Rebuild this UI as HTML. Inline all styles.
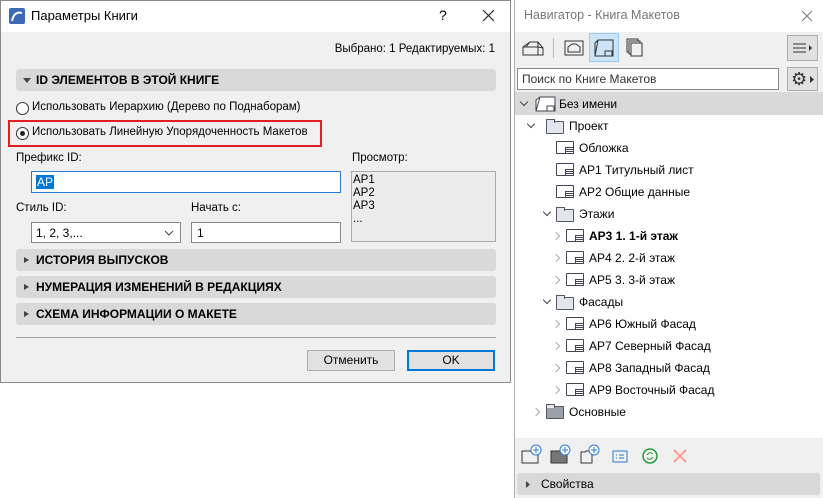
<!DOCTYPE html>
<html><head><meta charset="utf-8"><style>
*{margin:0;padding:0;box-sizing:border-box}
body{width:823px;height:498px;background:#fff;font-family:"Liberation Sans",sans-serif;font-size:12px;color:#000;position:relative;overflow:hidden}
.a{position:absolute;white-space:nowrap}
.sec{position:absolute;left:16px;width:480px;height:22px;background:#d9d9d9;border-radius:3px;font-weight:bold;font-size:12px;line-height:22px;padding-left:20px}
.sec:before{content:"";position:absolute;left:8px;top:8px;border-left:5px solid #444;border-top:3px solid transparent;border-bottom:3px solid transparent}
.sec.open:before{left:7px;top:9px;border-top:5px solid #444;border-left:4px solid transparent;border-right:4px solid transparent;border-bottom:0}
.radio{position:absolute;width:13px;height:13px;border:1px solid #333;border-radius:50%;background:#fff}
.row{position:absolute;height:22px;line-height:22px;font-size:12px}
.sheet{position:absolute;width:18px;height:13px;border:1px solid #445;border-radius:1px;background:#fff}
.sheet:after{content:"";position:absolute;right:-1px;bottom:-1px;width:7px;height:5px;border:1px solid #445;background:repeating-linear-gradient(#fff 0 1px,#445 1px 2px)}
.fold{position:absolute;width:18px;height:13px;border:1px solid #556;background:#e3e6ec;border-radius:1px}
.fold:before{content:"";position:absolute;left:-1px;top:-3px;width:7px;height:3px;border:1px solid #556;border-bottom:0;background:#e3e6ec}
.chev{position:absolute;width:6px;height:6px;border-right:1.5px solid #444;border-bottom:1.5px solid #444}
.cr{transform:rotate(-45deg);border-color:#aaa}
.cd{transform:rotate(45deg)}
.sm{font-size:11.5px}
</style></head><body>
<div class="a" style="left:0;top:0;width:511px;height:383px;border:1px solid #8a8a8a;background:#f0f0f0"></div>
<div class="a" style="left:1px;top:1px;width:509px;height:31px;background:#fff"></div>
<svg class="a" style="left:9px;top:8px" width="16" height="16"><rect width="16" height="16" rx="2" fill="#3d6bb3"/><path d="M3 13 Q5 3 13 5" stroke="#fff" stroke-width="2" fill="none"/></svg>
<div class="a" style="left:31px;top:8px;font-size:13px">Параметры Книги</div>
<div class="a" style="left:439px;top:7px;font-size:14px">?</div>
<svg class="a" style="left:482px;top:9px" width="13" height="13"><path d="M1 1L12 12M12 1L1 12" stroke="#222" stroke-width="1.2"/></svg>
<div class="a sm" style="right:328px;top:43px">Выбрано: 1 Редактируемых: 1</div>
<div class="sec open" style="top:69px">ID ЭЛЕМЕНТОВ В ЭТОЙ КНИГЕ</div>
<div class="radio" style="left:16px;top:102px"></div>
<div class="a sm" style="left:32px;top:101px">Использовать Иерархию (Дерево по Поднаборам)</div>
<div class="a" style="left:8px;top:120px;width:314px;height:27px;border:2px solid #e02020"></div>
<div class="radio" style="left:16px;top:127px"><div style="position:absolute;left:3px;top:3px;width:5px;height:5px;border-radius:50%;background:#222"></div></div>
<div class="a sm" style="left:32px;top:126px">Использовать Линейную Упорядоченность Макетов</div>
<div class="a sm" style="left:16px;top:152px">Префикс ID:</div>
<div class="a" style="left:31px;top:171px;width:310px;height:22px;border:1px solid #2a7ad5;background:#fff"><span style="position:absolute;left:4px;top:3px;background:#0078d7;color:#fff;padding:0 1px">AP</span></div>
<div class="a sm" style="left:352px;top:152px">Просмотр:</div>
<div class="a" style="left:351px;top:171px;width:145px;height:71px;border:1px solid #aaa;background:#ececec;line-height:13px;padding:2px 0 0 1px;font-size:11.5px;white-space:normal">AP1<br>AP2<br>AP3<br>...</div>
<div class="a sm" style="left:16px;top:202px">Стиль ID:</div>
<div class="a" style="left:31px;top:222px;width:150px;height:21px;border:1px solid #888;background:#fff;padding:3px 4px">1, 2, 3,...<svg style="position:absolute;right:6px;top:7px" width="10" height="6"><path d="M1 1L5 5L9 1" stroke="#444" fill="none"/></svg></div>
<div class="a sm" style="left:191px;top:202px">Начать с:</div>
<div class="a" style="left:191px;top:222px;width:150px;height:21px;border:1px solid #888;background:#fff;padding:3px 5px">1</div>
<div class="sec" style="top:249px">ИСТОРИЯ ВЫПУСКОВ</div>
<div class="sec" style="top:276px">НУМЕРАЦИЯ ИЗМЕНЕНИЙ В РЕДАКЦИЯХ</div>
<div class="sec" style="top:303px">СХЕМА ИНФОРМАЦИИ О МАКЕТЕ</div>
<div class="a" style="left:16px;top:337px;width:480px;height:1px;background:#a0a0a0"></div>
<div class="a" style="left:307px;top:350px;width:88px;height:21px;border:1px solid #adadad;background:#e1e1e1;text-align:center;line-height:19px">Отменить</div>
<div class="a" style="left:407px;top:350px;width:88px;height:21px;border:2px solid #0078d7;background:#e1e1e1;text-align:center;line-height:17px">OK</div>
<div class="a" style="left:514px;top:0;width:309px;height:498px;border-left:1px solid #b0b0b0;background:#fff"></div>
<div class="a" style="left:524px;top:8px;color:#777;font-size:12.5px">Навигатор - Книга Макетов</div>
<svg class="a" style="left:801px;top:10px" width="12" height="12"><path d="M1 1L11 11M11 1L1 11" stroke="#777"/></svg>
<div class="a" style="left:515px;top:32px;width:308px;height:60px;background:#f0f0f0"></div>
<svg class="a" style="left:522px;top:40px" width="22" height="16"><path d="M1 15V7L8 2H16L21 8V15ZM1 7H16L21 8M16 2V15M8 2 4 7" stroke="#333" fill="none"/></svg>
<div class="a" style="left:553px;top:38px;width:1px;height:20px;background:#bbb"></div>
<svg class="a" style="left:564px;top:40px" width="20" height="16"><rect x="1" y="1" width="18" height="14" fill="none" stroke="#333"/><path d="M4 12V7L8 4H12L16 7V12Z" fill="none" stroke="#333"/></svg>
<div class="a" style="left:589px;top:33px;width:30px;height:29px;background:#cce4f7;border:1px solid #99c9ef"></div>
<svg class="a" style="left:593px;top:38px" width="22" height="20"><path d="M5 2H20V18H2V5ZM5 2 2 18M12 13H19V18H12Z" fill="none" stroke="#333"/></svg>
<svg class="a" style="left:626px;top:38px" width="18" height="20"><rect x="1" y="1" width="11" height="13" fill="none" stroke="#333"/><rect x="3" y="3" width="11" height="13" fill="#f0f0f0" stroke="#333"/><rect x="5" y="5" width="11" height="13" fill="#f0f0f0" stroke="#333"/></svg>
<div class="a" style="left:787px;top:35px;width:31px;height:26px;border:1px solid #adadad;background:#e1e1e1"><svg style="position:absolute;left:5px;top:7px" width="20" height="11"><path d="M0 1H13M0 5H13M0 9H13" stroke="#333"/><path d="M16 2L19 5L16 8Z" fill="#333"/></svg></div>
<div class="a" style="left:517px;top:68px;width:262px;height:22px;border:1px solid #888;background:#fff;padding:3px 4px;color:#333">Поиск по Книге Макетов</div>
<div class="a" style="left:787px;top:67px;width:31px;height:24px;border:1px solid #adadad;background:#e1e1e1"><span style="position:absolute;left:3px;top:0px;font-size:18px;color:#333;line-height:22px">⚙</span><svg style="position:absolute;left:22px;top:8px" width="5" height="7"><path d="M0 0L4 3.5L0 7Z" fill="#333"/></svg></div>
<div class="a" style="left:515px;top:92px;width:308px;height:23px;background:#d9d9d9"></div>
<div class="chev cd" style="left:521px;top:99px"></div>
<svg class="a" style="left:535px;top:96px" width="22" height="16"><path d="M5 1H20V15H1V4ZM5 1 1 15M12 10H19V15H12Z" fill="#fff" stroke="#445"/></svg>
<div class="row" style="left:559px;top:93px">Без имени</div>
<div class="chev cd" style="left:528px;top:121px"></div><div class="fold" style="left:546px;top:121px"></div><div class="row" style="left:569px;top:115px">Проект</div>
<div class="sheet" style="left:556px;top:141px"></div><div class="row" style="left:579px;top:137px">Обложка</div>
<div class="sheet" style="left:556px;top:163px"></div><div class="row" style="left:579px;top:159px">AP1 Титульный лист</div>
<div class="sheet" style="left:556px;top:185px"></div><div class="row" style="left:579px;top:181px">AP2 Общие данные</div>
<div class="chev cd" style="left:544px;top:209px"></div><div class="fold" style="left:556px;top:209px"></div><div class="row" style="left:579px;top:203px">Этажи</div>
<div class="chev cr" style="left:553px;top:233px"></div><div class="sheet" style="left:566px;top:229px"></div><div class="row" style="left:589px;top:225px;font-weight:bold">AP3 1. 1-й этаж</div>
<div class="chev cr" style="left:553px;top:255px"></div><div class="sheet" style="left:566px;top:251px"></div><div class="row" style="left:589px;top:247px">AP4 2. 2-й этаж</div>
<div class="chev cr" style="left:553px;top:277px"></div><div class="sheet" style="left:566px;top:273px"></div><div class="row" style="left:589px;top:269px">AP5 3. 3-й этаж</div>
<div class="chev cd" style="left:544px;top:297px"></div><div class="fold" style="left:556px;top:297px"></div><div class="row" style="left:579px;top:291px">Фасады</div>
<div class="chev cr" style="left:553px;top:321px"></div><div class="sheet" style="left:566px;top:317px"></div><div class="row" style="left:589px;top:313px">AP6 Южный Фасад</div>
<div class="chev cr" style="left:553px;top:343px"></div><div class="sheet" style="left:566px;top:339px"></div><div class="row" style="left:589px;top:335px">AP7 Северный Фасад</div>
<div class="chev cr" style="left:553px;top:365px"></div><div class="sheet" style="left:566px;top:361px"></div><div class="row" style="left:589px;top:357px">AP8 Западный Фасад</div>
<div class="chev cr" style="left:553px;top:387px"></div><div class="sheet" style="left:566px;top:383px"></div><div class="row" style="left:589px;top:379px">AP9 Восточный Фасад</div>
<div class="chev cr" style="left:533px;top:409px"></div><div class="fold" style="left:546px;top:406px;background:#9aa0aa"></div><div class="row" style="left:569px;top:401px">Основные</div>
<div class="a" style="left:515px;top:438px;width:308px;height:60px;background:#f0f0f0"></div>
<svg class="a" style="left:520px;top:443px" width="200" height="22">
<rect x="2" y="8" width="16" height="12" fill="none" stroke="#333"/><circle cx="16" cy="7" r="5" fill="#fff" stroke="#2a7ad5"/><path d="M16 4V10M13 7H19" stroke="#2a7ad5"/>
<rect x="31" y="8" width="16" height="12" fill="#777" stroke="#333"/><circle cx="45" cy="7" r="5" fill="#fff" stroke="#2a7ad5"/><path d="M45 4V10M42 7H48" stroke="#2a7ad5"/>
<path d="M61 9H65L66 8H72V20H61Z" fill="none" stroke="#333"/><circle cx="74" cy="7" r="5" fill="#fff" stroke="#2a7ad5"/><path d="M74 4V10M71 7H77" stroke="#2a7ad5"/>
<rect x="93" y="8" width="14" height="11" fill="none" stroke="#2a7ad5"/><path d="M96 12H97M99 12H104M96 15H97M99 15H104" stroke="#2a7ad5"/>
<circle cx="130" cy="13" r="7" fill="none" stroke="#2a9a3a" stroke-width="1.5"/><path d="M127 12Q130 8 133 11M133 14Q130 18 127 15" stroke="#2a9a3a" fill="none"/>
<path d="M154 7L166 19M166 7L154 19" stroke="#f4a090" stroke-width="2"/>
</svg>
<div class="a" style="left:517px;top:473px;width:303px;height:22px;background:#d9d9d9;border-radius:3px;line-height:22px;padding-left:24px">Свойства<svg style="position:absolute;left:9px;top:8px" width="5" height="7"><path d="M0 0L4 3.5L0 7Z" fill="#444"/></svg></div>
</body></html>
